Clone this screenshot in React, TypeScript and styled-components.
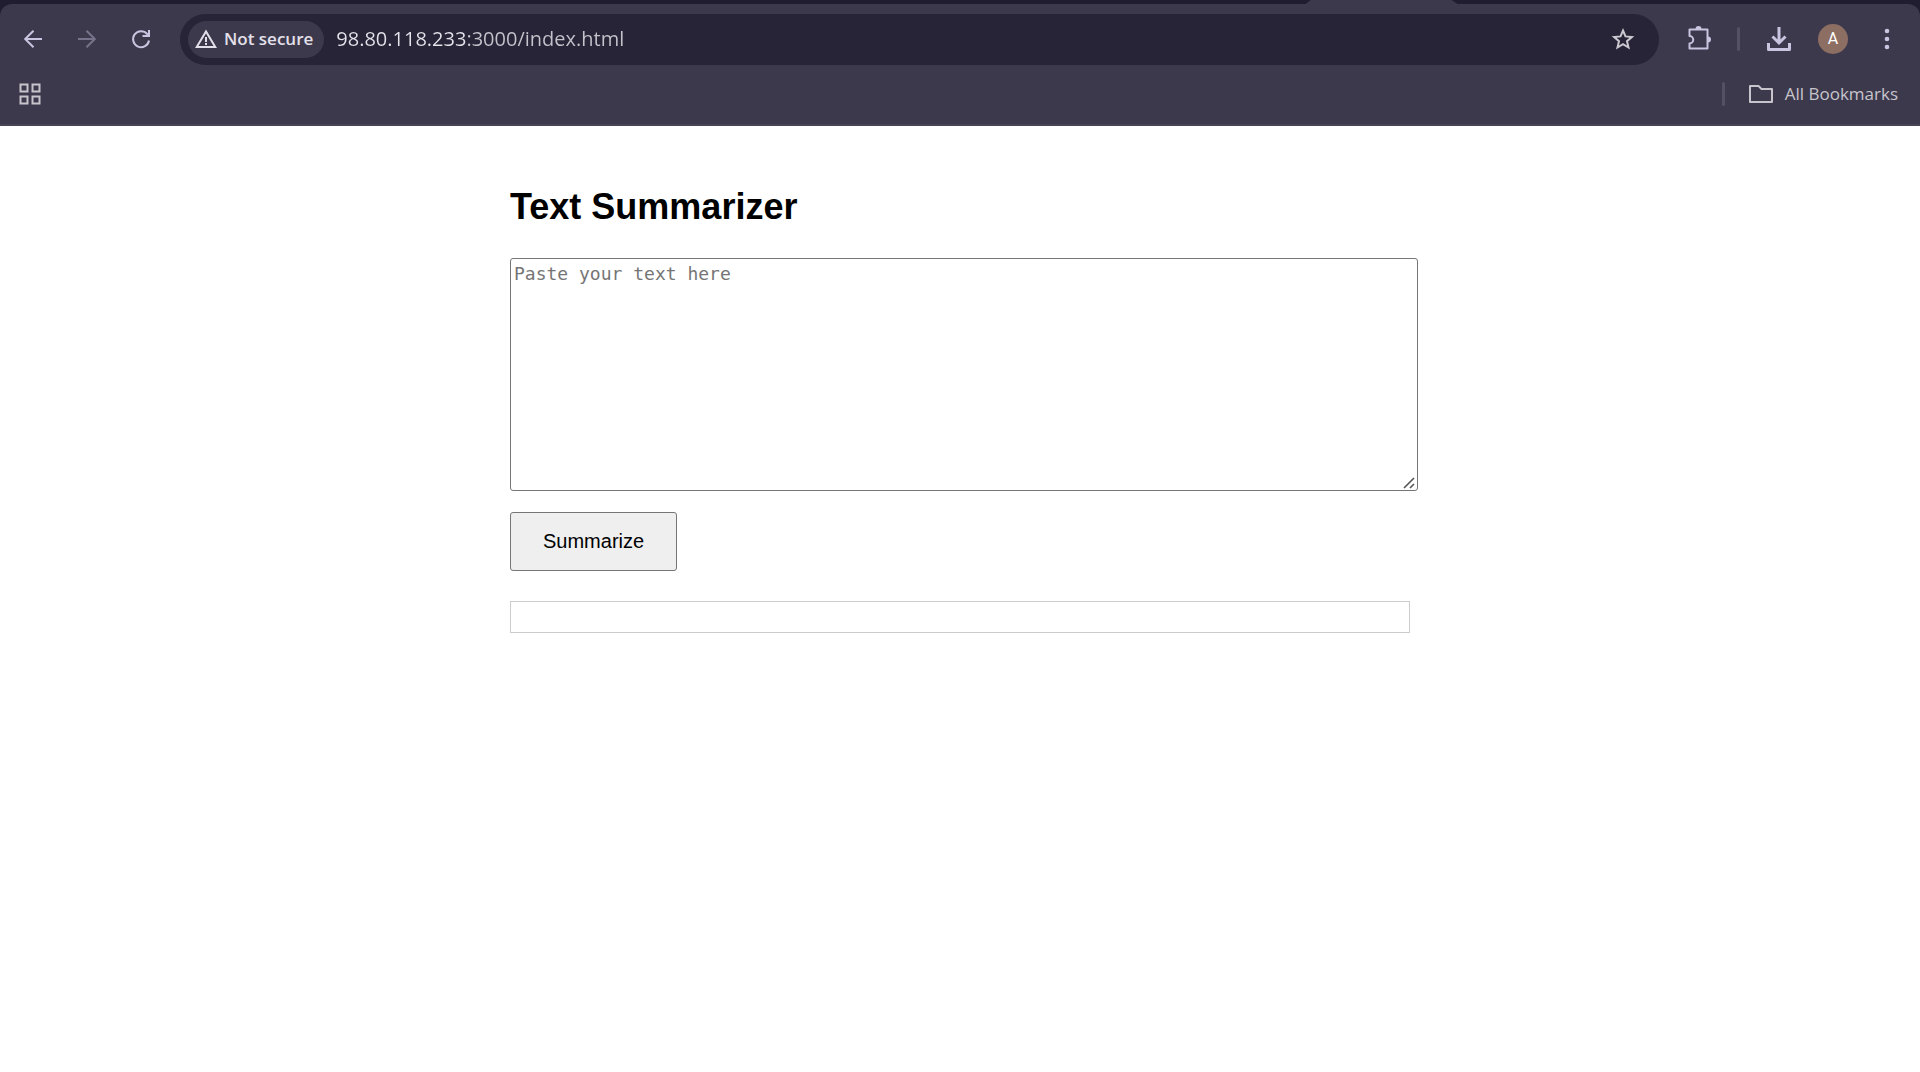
import React, { useState } from "react";
import styled, { createGlobalStyle } from "styled-components";

const GlobalStyle = createGlobalStyle`
  *, *::before, *::after { box-sizing: border-box; }
  body {
    margin: 0;
    background: #ffffff;
    font-family: "Liberation Sans", Arial, sans-serif;
  }
`;

const uiFont = `"Open Sans", "Noto Sans", sans-serif`;

const Chrome = styled.header`
  background: #1f1d2f;
  font-family: ${uiFont};
`;

const TabStrip = styled.div`
  height: 4px;
  padding-left: 68%;
`;

const ActiveTab = styled.div`
  width: 152px;
  height: 4px;
  background: #3c394c;
  clip-path: polygon(5px 0, 146px 0, 152px 100%, 0 100%);
`;

const Bars = styled.div`
  background: #3c394c;
  border-radius: 12px 12px 0 0;
  border-bottom: 2px solid #474551;
`;

const Toolbar = styled.div`
  display: flex;
  align-items: center;
  height: 70px;
  padding: 0 15px;
`;

const NavGroup = styled.nav`
  display: flex;
  gap: 18px;
  margin-right: 21px;
`;

const IconButton = styled.button<{ $dim?: boolean }>`
  display: grid;
  place-items: center;
  flex: none;
  width: 36px;
  height: 36px;
  padding: 0;
  border: 0;
  border-radius: 50%;
  background: transparent;
  color: ${(p) => (p.$dim ? "#77738a" : "#c9c4e0")};
`;

const AddressBar = styled.form`
  display: flex;
  align-items: center;
  flex: 1;
  min-width: 0;
  height: 51px;
  padding: 0 18px 0 8px;
  border-radius: 26px;
  background: #262436;
`;

const SecurityChip = styled.button`
  display: flex;
  align-items: center;
  flex: none;
  gap: 7px;
  height: 37px;
  padding: 0 11px 0 7px;
  border: 0;
  border-radius: 19px;
  background: #3c394c;
  color: #e4e0ea;
  font: 600 17px/24px ${uiFont};
`;

const UrlInput = styled.input`
  flex: 1;
  min-width: 0;
  margin-left: 12px;
  padding: 0;
  border: 0;
  outline: 0;
  font: 400 20px/28px ${uiFont};
  color: #e6e3ec;
  background: linear-gradient(90deg, #e6e3ec 130px, #c6c3cd 130px);
  background-clip: text;
  -webkit-background-clip: text;
  -webkit-text-fill-color: transparent;
`;

const StarButton = styled(IconButton)`
  color: #cbc8d0;
`;

const Actions = styled.div`
  display: flex;
  align-items: center;
  gap: 21px;
  margin-left: 21px;
`;

const Divider = styled.span`
  flex: none;
  width: 3px;
  height: 24px;
  border-radius: 2px;
  background: #545165;
`;

const Avatar = styled.button`
  width: 30px;
  height: 30px;
  padding: 0;
  border: 0;
  border-radius: 50%;
  background: #8d6e63;
  color: #ffffff;
  font: 400 16px/30px Roboto, sans-serif;
`;

const BookmarksBar = styled.div`
  display: flex;
  align-items: center;
  justify-content: space-between;
  height: 50px;
  padding: 0 22px 10px 12px;
`;

const AppsButton = styled(IconButton)`
  color: #c7c4cc;
`;

const BookmarksGroup = styled.div`
  display: flex;
  align-items: center;
  gap: 24px;
`;

const AllBookmarks = styled.button`
  display: flex;
  align-items: center;
  gap: 12px;
  padding: 0;
  border: 0;
  background: transparent;
  color: #c7c4cc;
  font: 400 17px/24px ${uiFont};
`;

const Page = styled.main`
  width: 900px;
  max-width: calc(100% - 40px);
  margin: 0 auto;
  padding-top: 60px;
`;

const Title = styled.h1`
  margin: 0 0 31px;
  font-size: 36px;
  line-height: 41px;
  font-weight: 700;
  color: #000000;
`;

const gripIcon = `url("data:image/svg+xml,%3Csvg xmlns='http://www.w3.org/2000/svg' width='15' height='15' fill='none' stroke='%23555555' stroke-width='1.6'%3E%3Cpath d='M2 13L12 3M8 13L12 9'/%3E%3C/svg%3E")`;

const SourceText = styled.textarea`
  display: block;
  width: calc(100% + 8px);
  height: 233px;
  padding: 3px;
  border: 1px solid #767676;
  border-radius: 3px;
  background: #ffffff;
  color: #000000;
  font: 400 18px/24px "DejaVu Sans Mono", monospace;

  &::placeholder { color: #757575; }

  &::-webkit-resizer {
    background: ${gripIcon} no-repeat right bottom;
  }
`;

const SummarizeButton = styled.button`
  display: block;
  height: 59px;
  margin-top: 21px;
  padding: 0 32px 2px;
  border: 1px solid #767676;
  border-radius: 3px;
  background: #efefef;
  color: #000000;
  font: 400 20px/24px "Liberation Sans", Arial, sans-serif;
`;

const Summary = styled.output`
  display: block;
  min-height: 32px;
  margin-top: 30px;
  padding: 15px;
  border: 1px solid #cccccc;
`;

const Svg = ({ size = 24, sw = 2, children }: { size?: number; sw?: number; children: React.ReactNode }) => (
  <svg width={size} height={size} viewBox={`0 0 ${size} ${size}`} fill="none" stroke="currentColor" strokeWidth={sw} aria-hidden="true">
    {children}
  </svg>
);

export default function App() {
  const [url, setUrl] = useState("98.80.118.233:3000/index.html");
  const [text, setText] = useState("");

  return (
    <>
      <GlobalStyle />
      <Chrome>
        <TabStrip>
          <ActiveTab />
        </TabStrip>
        <Bars>
          <Toolbar>
            <NavGroup aria-label="Navigation">
              <IconButton type="button" aria-label="Back">
                <Svg><path d="M21 12H5M12.500 3.700L4.200 12l8.300 8.300" /></Svg>
              </IconButton>
              <IconButton type="button" aria-label="Forward" $dim>
                <Svg><path d="M3 12h16M11.500 3.700l8.300 8.300-8.300 8.300" /></Svg>
              </IconButton>
              <IconButton type="button" aria-label="Reload">
                <Svg><path d="M20 13.500A8 8 0 1 1 18.200 7L20 9M20 3v6h-6.500" /></Svg>
              </IconButton>
            </NavGroup>
            <AddressBar onSubmit={(e) => e.preventDefault()}>
              <SecurityChip type="button">
                <Svg size={22}>
                  <path d="M11 3.500L1.700 19h18.600z" />
                  <path d="M11 9v5M11 15v2" />
                </Svg>
                Not secure
              </SecurityChip>
              <UrlInput aria-label="Address" spellCheck={false} value={url} onChange={(e) => setUrl(e.target.value)} />
              <StarButton type="button" aria-label="Bookmark this page">
                <Svg>
                  <path d="M12 3.500l2.500 5.900 6.400.6-4.900 4.200 1.500 6.300L12 17.100l-5.500 3.400L8 14.200 3.100 10l6.400-.6z" />
                </Svg>
              </StarButton>
            </AddressBar>
            <Actions>
              <IconButton type="button" aria-label="Extensions">
                <Svg size={26}>
                  <path strokeLinejoin="round" d="M4.500 3.500h18v19h-18v-5a3.700 3.700 0 0 0 0-7.500z" />
                  <path fill="currentColor" stroke="none" d="M10.500 3a3 3 0 0 1 6 0zM23 10.500a3 3 0 0 1 0 6z" />
                </Svg>
              </IconButton>
              <Divider />
              <IconButton type="button" aria-label="Downloads">
                <Svg sw={3}>
                  <path d="M12 0v15M5.500 9.500L12 16l6.500-6.500" />
                  <path strokeLinejoin="round" d="M1.500 16v6.500h21V16" />
                </Svg>
              </IconButton>
              <Avatar type="button" aria-label="Profile">A</Avatar>
              <IconButton type="button" aria-label="Menu">
                <Svg>
                  <g fill="currentColor" stroke="none">
                    <circle cx="12" cy="4" r="2.300" />
                    <circle cx="12" cy="12" r="2.300" />
                    <circle cx="12" cy="20" r="2.300" />
                  </g>
                </Svg>
              </IconButton>
            </Actions>
          </Toolbar>
          <BookmarksBar>
            <AppsButton type="button" aria-label="Apps">
              <Svg size={22} sw={2}>
                <path d="M1.500 1.500h7v7h-7zM13.500 1.500h7v7h-7zM1.500 13.500h7v7h-7zM13.500 13.500h7v7h-7z" />
              </Svg>
            </AppsButton>
            <BookmarksGroup>
              <Divider />
              <AllBookmarks type="button">
                <Svg>
                  <path strokeLinejoin="round" d="M1 4h8.500l3 3H23v13H1z" />
                </Svg>
                All Bookmarks
              </AllBookmarks>
            </BookmarksGroup>
          </BookmarksBar>
        </Bars>
      </Chrome>
      <Page>
        <Title>Text Summarizer</Title>
        <SourceText aria-label="Text to summarize" placeholder="Paste your text here" value={text} onChange={(e) => setText(e.target.value)} />
        <SummarizeButton type="button">Summarize</SummarizeButton>
        <Summary aria-label="Summary" />
      </Page>
    </>
  );
}
